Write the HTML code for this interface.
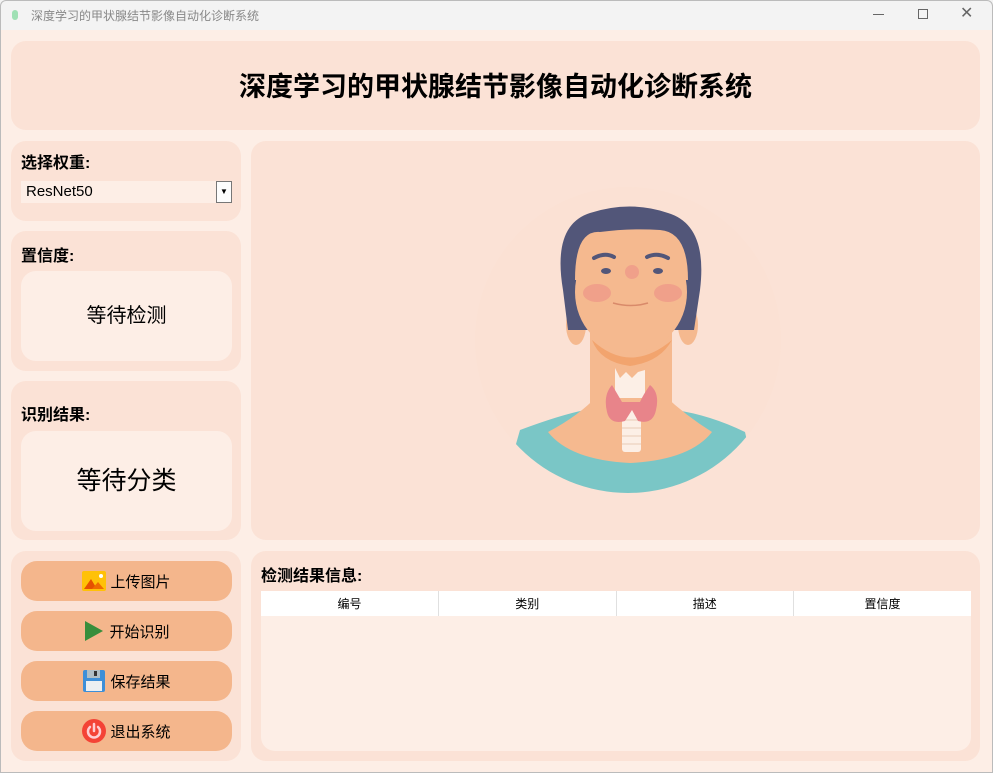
<!DOCTYPE html>
<html><head><meta charset="utf-8"><style>
*{margin:0;padding:0;box-sizing:border-box}
body{width:993px;height:773px;background:#fdeee6;font-family:"Liberation Sans","Noto Sans CJK SC",sans-serif;position:relative;overflow:hidden}
.a{position:absolute}
.tb{left:0;top:0;width:993px;height:30px;background:#f3f3f3;font-size:12px;color:#888}
.p{background:#fbe2d6;border-radius:15px}
.in{background:#fdeee6;border-radius:15px}
.lbl{font-size:16px;font-weight:bold;color:#000}
.btn{left:21px;width:211px;height:40px;background:#f4b68c;border-radius:16px;font-size:15px;color:#000;display:flex;align-items:center;justify-content:center;gap:4px}
th{font-weight:normal;font-size:12px;height:25px;background:#fff;border-right:1px solid #e0e0e0}
</style></head><body>
<div class="a tb">
 <div class="a" style="left:12px;top:10px;width:6px;height:10px;background:#9fe0b4;border-radius:3px"></div>
 <div class="a" style="left:31px;top:7px">深度学习的甲状腺结节影像自动化诊断系统</div>
 <div class="a" style="left:873px;top:14px;width:11px;height:1px;background:#666"></div>
 <div class="a" style="left:918px;top:9px;width:10px;height:10px;border:1px solid #666"></div>
 <div class="a" style="left:960px;top:3px;font-size:16px;color:#666">✕</div>
</div>
<div class="a p" style="left:11px;top:41px;width:969px;height:89px"></div>
<div class="a" style="left:11px;top:65px;width:969px;text-align:center;font-size:27px;font-weight:bold">深度学习的甲状腺结节影像自动化诊断系统</div>

<div class="a p" style="left:11px;top:141px;width:230px;height:80px"></div>
<div class="a lbl" style="left:21px;top:149px">选择权重:</div>
<div class="a" style="left:21px;top:181px;width:211px;height:22px;background:#fdeee6;font-size:15px;padding-left:5px;line-height:22px">ResNet50</div>
<div class="a" style="left:216px;top:181px;width:16px;height:22px;background:#fdfdfd;border:1px solid #777;font-size:8px;text-align:center;line-height:20px">▼</div>

<div class="a p" style="left:11px;top:231px;width:230px;height:140px"></div>
<div class="a lbl" style="left:21px;top:242px">置信度:</div>
<div class="a in" style="left:21px;top:271px;width:211px;height:90px;font-size:20px;text-align:center;line-height:90px">等待检测</div>

<div class="a p" style="left:11px;top:381px;width:230px;height:159px"></div>
<div class="a lbl" style="left:21px;top:401px">识别结果:</div>
<div class="a in" style="left:21px;top:431px;width:211px;height:100px;font-size:25px;text-align:center;line-height:100px">等待分类</div>

<div class="a p" style="left:251px;top:141px;width:729px;height:399px"></div>
<svg class="a" style="left:251px;top:141px" width="729" height="399" viewBox="251 141 729 399">
<defs><clipPath id="c"><circle cx="628" cy="340" r="153"/></clipPath></defs>
<circle cx="628" cy="340" r="153" fill="#fbe1d4"/>
<g clip-path="url(#c)">
<path d="M520 430 Q560 415 585 410 L675 410 Q710 415 745 432 L760 500 L500 500Z" fill="#7ac6c6"/>
<path d="M548 432 Q580 415 598 395 L664 395 Q685 415 712 432 Q690 460 630 463 Q570 460 548 432Z" fill="#f5b98f"/>
</g>
<rect x="590" y="320" width="82" height="110" fill="#f5b98f"/>
<ellipse cx="576" cy="325" rx="10" ry="20" fill="#f5b98f"/>
<ellipse cx="688" cy="325" rx="10" ry="20" fill="#f5b98f"/>
<path d="M563 290 Q552 225 590 213 Q630 200 668 213 Q708 225 700 290 L694 330 L568 330Z" fill="#525679"/>
<ellipse cx="631" cy="292" rx="56" ry="60" fill="#f5b98f"/>
<path d="M575 280 Q575 230 600 232 Q630 228 660 230 Q688 232 688 280Z" fill="#f5b98f"/>
<path d="M592 340 Q630 375 672 340 Q660 362 630 366 Q600 362 592 340Z" fill="#f2a46e"/>
<ellipse cx="597" cy="293" rx="14" ry="9" fill="#f0a08a"/>
<ellipse cx="668" cy="293" rx="14" ry="9" fill="#f0a08a"/>
<circle cx="632" cy="272" r="7" fill="#f0a08a"/>
<path d="M594 258 Q605 252 614 257 M647 257 Q657 252 668 258" stroke="#525679" stroke-width="4" fill="none" stroke-linecap="round"/>
<ellipse cx="606" cy="271" rx="5" ry="3" fill="#525679"/>
<ellipse cx="658" cy="271" rx="5" ry="3" fill="#525679"/>
<path d="M613 303 Q631 308 648 303" stroke="#d98a6a" stroke-width="1.5" fill="none"/>
<path d="M615 368 L620 378 L626 372 L632 378 L638 372 L645 370 L645 398 L615 398Z" fill="#fcefe6"/>
<rect x="622" y="410" width="19" height="42" rx="3" fill="#fcefe6"/>
<path d="M622 420h19M622 428h19M622 436h19M622 444h19" stroke="#e8cbb5" stroke-width="1"/>
<path d="M612 385 Q603 395 607 412 Q610 425 625 421 L632 410 L638 421 Q653 425 656 410 Q660 393 650 385 Q643 395 640 402 L622 402 Q618 395 612 385Z" fill="#e8848a"/>
</svg>

<div class="a p" style="left:11px;top:551px;width:230px;height:210px"></div>
<div class="a btn" style="top:561px"><svg width="24" height="20"><rect width="24" height="20" rx="2" fill="#ffc107"/><path d="M2 18L9 8L15 18Z" fill="#e65100"/><path d="M10 18L16 11L22 18Z" fill="#ef6c00"/><circle cx="19" cy="5" r="2" fill="#fff"/></svg>上传图片</div>
<div class="a btn" style="top:611px"><svg width="22" height="22"><path d="M2 1L20 11L2 21Z" fill="#388e3c"/></svg>开始识别</div>
<div class="a btn" style="top:661px"><svg width="24" height="24"><rect x="1" y="1" width="22" height="22" rx="2" fill="#3d8fd8"/><rect x="5" y="1" width="13" height="8" fill="#b0bec5"/><rect x="12" y="2" width="3" height="5" fill="#333"/><rect x="4" y="12" width="16" height="10" fill="#eceff1"/></svg>保存结果</div>
<div class="a btn" style="top:711px"><svg width="24" height="24"><circle cx="12" cy="12" r="12" fill="#f44336"/><path d="M8 8A6 6 0 1 0 16 8" stroke="#ffcdd2" stroke-width="2.5" fill="none" stroke-linecap="round"/><path d="M12 5V12" stroke="#ffcdd2" stroke-width="2.5" stroke-linecap="round"/></svg>退出系统</div>

<div class="a p" style="left:251px;top:551px;width:729px;height:210px"></div>
<div class="a lbl" style="left:261px;top:562px">检测结果信息:</div>
<div class="a" style="left:261px;top:591px;width:710px;height:160px;background:#fdeee6;border-radius:0 0 14px 14px;overflow:hidden">
<table style="width:710px;border-collapse:collapse;table-layout:fixed"><tr><th>编号</th><th>类别</th><th>描述</th><th style="border:none">置信度</th></tr></table>
</div>
<div class="a" style="left:0;top:0;width:993px;height:773px;border:1px solid #bbb;border-radius:6px 6px 0 0;pointer-events:none"></div>
</body></html>
